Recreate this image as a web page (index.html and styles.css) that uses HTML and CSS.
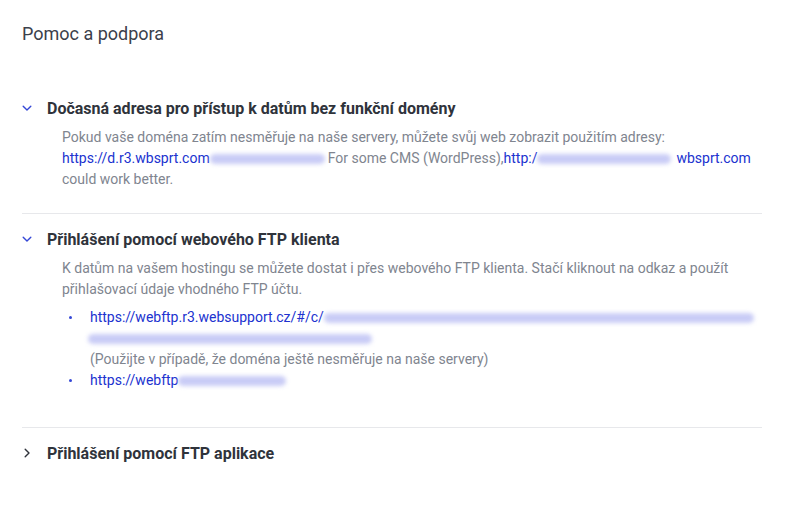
FILE: index.html
```html
<!DOCTYPE html>
<html lang="cs">
<head>
<meta charset="utf-8">
<title>Pomoc a podpora</title>
<link rel="stylesheet" href="styles.css">
</head>
<body>
<div class="page">
  <h1 class="title">Pomoc a podpora</h1>

  <section class="item open">
    <div class="head">
      <svg class="chev" viewBox="0 0 10 10" width="10" height="10"><path d="M1.2 3.2 L5 7 L8.8 3.2" /></svg>
      <span>Dočasná adresa pro přístup k datům bez funkční domény</span>
    </div>
    <div class="body">
      <p>Pokud vaše doména zatím nesměřuje na naše servery, můžete svůj web zobrazit použitím adresy: <a href="#">https://d.r3.wbsprt.com</a><span class="blob b1"></span>For some CMS (WordPress),<a href="#">http:/</a><span class="blob b2"></span><a href="#">wbsprt.com</a> could work better.</p>
    </div>
  </section>

  <section class="item open">
    <div class="head">
      <svg class="chev" viewBox="0 0 10 10" width="10" height="10"><path d="M1.2 3.2 L5 7 L8.8 3.2" /></svg>
      <span>Přihlášení pomocí webového FTP klienta</span>
    </div>
    <div class="body">
      <p>K datům na vašem hostingu se můžete dostat i přes webového FTP klienta. Stačí kliknout na odkaz a použít přihlašovací údaje vhodného FTP účtu.</p>
      <ul class="links">
        <li><a href="#">https://webftp.r3.websupport.cz/#/c/</a><span class="blob b3"></span><br><span class="blob b4"></span><br><span class="note">(Použijte v případě, že doména ještě nesměřuje na naše servery)</span></li>
        <li><a href="#">https://webftp</a><span class="blob b5"></span></li>
      </ul>
    </div>
  </section>

  <section class="item closed">
    <div class="head">
      <svg class="chev" viewBox="0 0 10 10" width="10" height="10"><path d="M3.2 1.2 L7 5 L3.2 8.8" /></svg>
      <span>Přihlášení pomocí FTP aplikace</span>
    </div>
  </section>
</div>
</body>
</html>
```

FILE: styles.css
```css
html, body {
  margin: 0;
  padding: 0;
  background: #ffffff;
}
body {
  font-family: Roboto, "Liberation Sans", Arial, sans-serif;
  color: #80858f;
}
.page {
  padding: 22px 23px 0 22px;
}
.title {
  margin: 0 0 50px 0;
  font-size: 18px;
  line-height: 24px;
  font-weight: 400;
  color: #3b404b;
}
.item {
  border-bottom: 1px solid #e7e8eb;
}
.item.closed {
  border-bottom: none;
}
.item + .item {
  padding-top: 13px;
}
.head {
  display: flex;
  align-items: center;
  gap: 15px;
  height: 24px;
  font-size: 16px;
  font-weight: 700;
  color: #2f333b;
  padding-left: 0;
}
.chev {
  flex: none;
  fill: none;
  stroke-width: 1.4;
  stroke-linecap: round;
  stroke-linejoin: round;
}
.open .chev { stroke: #3447d6; }
.closed .chev { stroke: #2f333b; }
.body {
  padding: 7px 0 23px 40px;
  font-size: 14px;
  line-height: 21px;
}
.body p {
  margin: 0;
}
a {
  color: #2032cf;
  text-decoration: none;
}
.links {
  list-style: none;
  margin: 7px 0 0 0;
  padding: 0 0 13px 28px;
}
.links li {
  position: relative;
}
.links li::before {
  content: "";
  position: absolute;
  left: -21px;
  top: 9px;
  width: 3px;
  height: 3px;
  border-radius: 50%;
  background: #3447d6;
}
.blob {
  display: inline-block;
  height: 10px;
  vertical-align: -1px;
  border-radius: 6px;
  background: #c9ccf6;
  filter: blur(2px);
}
.b1 { width: 115px; margin: 0 3px 0 0; }
.b2 { width: 134px; margin: 0 5px 0 0; }
.b3 { width: 430px; margin-left: 0; }
.b4 { width: 284px; margin-left: -2px; }
.b5 { width: 108px; margin-left: 0; }
.note { color: #80858f; }
```
